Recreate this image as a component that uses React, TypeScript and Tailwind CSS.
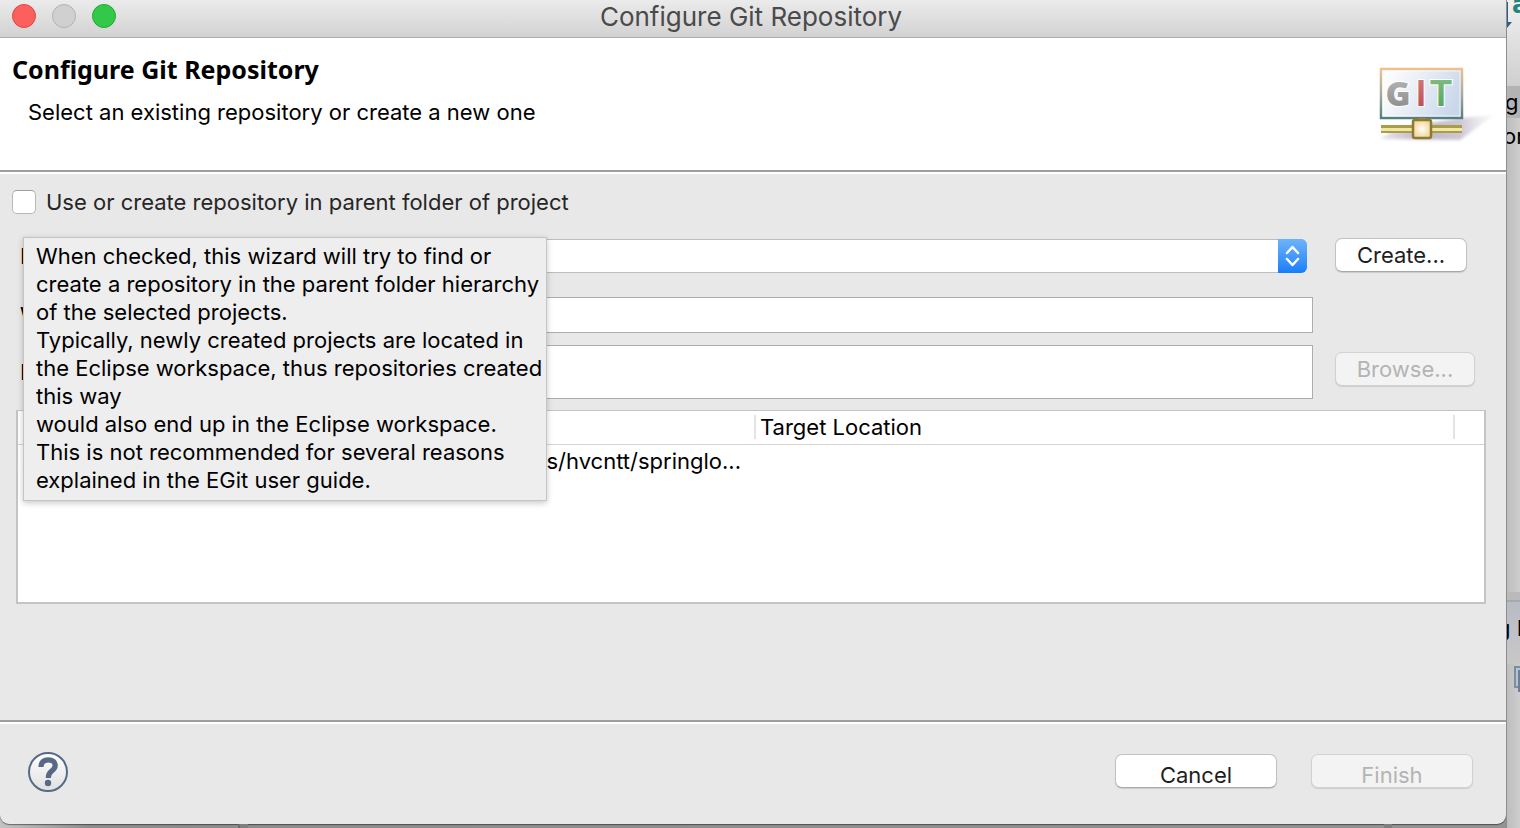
import React from "react";

const field = "block w-full border border-[#adadad] bg-white px-2 outline-none";
const button = "h-[34px] rounded-[7px] border text-[22px] leading-[32px] shadow-[0_1px_1px_rgba(0,0,0,0.12)]";
const enabled = "border-[#c2c2c2] border-b-[#a9a9a9] bg-white text-[#1e1e1e]";
const disabled = "border-[#d2d2d2] bg-[#f3f3f3] text-[#b4b4b4]";

function Divider() {
  return <div className="h-1 shrink-0 border-t-2 border-[#9e9e9e] bg-white" />;
}

function TrafficLights() {
  return (
    <div className="absolute left-3 top-1 flex gap-4">
      <button aria-label="Close" className="size-6 rounded-full border border-[#e2463f] bg-[#fc605c]" />
      <button aria-label="Minimize" disabled className="size-6 rounded-full border border-[#b2b2b2] bg-[#d0d0d0]" />
      <button aria-label="Zoom" className="size-6 rounded-full border border-[#1faa32] bg-[#34c84a]" />
    </div>
  );
}

function GitLogo() {
  return (
    <svg width="120" height="84" viewBox="0 0 120 84" aria-label="Git">
      <defs>
        <linearGradient id="frame" x1="0" y1="0" x2="0" y2="1">
          <stop offset="0" stopColor="#f0bf8e" />
          <stop offset="0.5" stopColor="#a9ab9d" />
          <stop offset="1" stopColor="#52807f" />
        </linearGradient>
        <linearGradient id="screen" x1="0" y1="0.2" x2="1" y2="0.5">
          <stop offset="0" stopColor="#ffffff" />
          <stop offset="0.45" stopColor="#e9eef6" />
          <stop offset="1" stopColor="#c9d7ea" />
        </linearGradient>
        <linearGradient id="shade" x1="0" y1="0" x2="1" y2="0">
          <stop offset="0" stopColor="#b9aec3" stopOpacity="0.3" />
          <stop offset="0.35" stopColor="#b9aec3" stopOpacity="0.9" />
          <stop offset="0.7" stopColor="#c0b8c9" stopOpacity="0.8" />
          <stop offset="1" stopColor="#d8d3dc" stopOpacity="0.1" />
        </linearGradient>
        <linearGradient id="gray" x1="0" y1="0" x2="0" y2="1">
          <stop offset="0" stopColor="#bdbdbd" />
          <stop offset="1" stopColor="#858585" />
        </linearGradient>
        <linearGradient id="red" x1="0" y1="0" x2="0" y2="1">
          <stop offset="0" stopColor="#d57f80" />
          <stop offset="1" stopColor="#b8474b" />
        </linearGradient>
        <linearGradient id="green" x1="0" y1="0" x2="0" y2="1">
          <stop offset="0" stopColor="#85bf85" />
          <stop offset="1" stopColor="#50a258" />
        </linearGradient>
        <radialGradient id="node">
          <stop offset="0" stopColor="#fffdf5" />
          <stop offset="1" stopColor="#f2d9a0" />
        </radialGradient>
        <filter id="soft" x="-10%" y="-20%" width="120%" height="140%">
          <feGaussianBlur stdDeviation="1.5" />
        </filter>
      </defs>
      <path d="M2 73 L20 62 L84 52 L116 49 L82 74 Z" fill="url(#shade)" filter="url(#soft)" />
      <rect x="3" y="3" width="81" height="49" fill="url(#screen)" stroke="url(#frame)" strokeWidth="2.500" />
      <rect x="5" y="5" width="77" height="45" fill="none" stroke="#ffffff" strokeOpacity="0.7" />
      <g fontFamily="'Open Sans', sans-serif" fontWeight="700" fontSize="34" stroke="#ffffff" strokeWidth="2" paintOrder="stroke" textAnchor="middle">
        <text x="20" y="40" fill="url(#gray)" fontWeight="800">G</text>
        <text x="43" y="40" fill="url(#red)" fontFamily="'Liberation Sans', sans-serif" fontSize="36">I</text>
        <text x="63" y="40" fill="url(#green)" fontFamily="'Liberation Sans', sans-serif" fontSize="36">T</text>
      </g>
      <path d="M40 52 h8 v3 h-8z" fill="#9a8b3c" />
      <rect x="3" y="59" width="81" height="8" fill="#a89d49" />
      <rect x="3" y="62" width="81" height="3" fill="#f1e8a6" />
      <rect x="35" y="54" width="18" height="18" rx="2" fill="url(#node)" stroke="#8f7a32" strokeWidth="2.500" />
    </svg>
  );
}

function Workbench() {
  return (
    <div aria-hidden="true" className="flex w-3.5 shrink-0 flex-col overflow-hidden border-l border-[#8d8d8d] bg-linear-to-r from-[#bdbdbd] to-[#cecece] text-[22px] leading-8 text-black">
      <div className="h-[86px] shrink-0 bg-linear-to-b from-[#f0f0f0] to-[#cfcfcf]">
        <svg width="14" height="30" viewBox="0 0 14 30">
          <path d="M0 2h1v20h4l-5 6z" fill="#2c5f86" />
          <text x="5" y="13" fontFamily="'DejaVu Sans', sans-serif" fontWeight="700" fontSize="24" fill="#23867b">a</text>
        </svg>
      </div>
      <div className="h-8 shrink-0 bg-[#b3b3b3]"><span className="-ml-0.5">g</span></div>
      <div className="h-[474px] shrink-0 pt-0.5"><span className="-ml-1">or</span></div>
      <div className="h-2.5 shrink-0 border-b-2 border-[#a5a8b2] bg-[#bababa]" />
      <div className="h-[62px] shrink-0 whitespace-nowrap bg-linear-to-b from-[#b9bbc4] to-[#c8c8c8] pt-2.5"><span className="-ml-2.5">g P</span></div>
      <svg width="14" height="30" viewBox="0 0 14 30" className="shrink-0">
        <rect x="8" y="3" width="12" height="20" fill="#b3c6d2" stroke="#7d8ea3" strokeWidth="2" />
        <rect x="12" y="7" width="12" height="20" fill="#8ca0b2" stroke="#6d7e96" strokeWidth="2" />
      </svg>
    </div>
  );
}

function Tooltip() {
  return (
    <div role="tooltip" className="absolute left-[23px] top-[63px] z-10 whitespace-nowrap border border-[#c4c4c4] bg-[#eeeeee] pb-1.5 pl-3 pt-1 text-[22px] leading-7 text-black shadow-[0_2px_6px_rgba(0,0,0,0.22)]">
      <p className="w-[510px]">
        When checked, this wizard will try to find or<br />
        create a repository in the parent folder hierarchy<br />
        of the selected projects.<br />
        Typically, newly created projects are located in<br />
        the Eclipse workspace, thus repositories created<br />
        this way<br />
        would also end up in the Eclipse workspace.<br />
        This is not recommended for several reasons<br />
        explained in the EGit user guide.
      </p>
    </div>
  );
}

export default function App() {
  return (
    <div className="flex min-h-screen overflow-hidden bg-[#8d8d8d] font-['Inter','Liberation_Sans',sans-serif]">
      <div className="flex min-w-0 flex-1 flex-col bg-linear-to-r from-[#c4c4c4] via-[#8d8d8d] via-6% to-[#939393]">
        <main className="flex flex-1 flex-col rounded-b-[9px] bg-[#e8e8e8] text-[22px] leading-7 shadow-[0_1px_1px_rgba(0,0,0,0.45)]">
          <header className="relative flex h-[38px] shrink-0 items-center justify-center border-b border-[#adadad] bg-linear-to-b from-[#ebebeb] to-[#d2d2d2]">
            <TrafficLights />
            <h1 className="pb-1 pr-1 text-[26px] leading-8 text-[#4a4a4a]">Configure Git Repository</h1>
          </header>

          <section className="flex h-[132px] shrink-0 justify-between bg-white pl-3 pr-2 text-black">
            <div className="pt-[15px]">
              <h2 className="font-['Noto_Sans',sans-serif] text-[25px] font-bold leading-8">Configure Git Repository</h2>
              <p className="pl-4 pt-[13px]">Select an existing repository or create a new one</p>
            </div>
            <div className="pt-7"><GitLogo /></div>
          </section>
          <Divider />

          <section className="relative flex flex-1 flex-col px-4">
            <div className="-ml-1 flex items-center gap-2.5 pt-3.5 text-[#262626]">
              <input id="parent" type="checkbox" className="size-6 appearance-none rounded-[5px] border border-[#b8b8b8] border-t-[#a0a0a0] bg-white" />
              <label htmlFor="parent">Use or create repository in parent folder of project</label>
            </div>

            <form className="mt-[23px] grid grid-cols-[254px_minmax(0,1fr)_140px] items-center gap-x-[22px] pl-1 pr-[15px] text-black" onSubmit={(e) => e.preventDefault()}>
              <label htmlFor="repo">Repository:</label>
              <div className="relative mr-1.5 h-[34px]">
                <select id="repo" className="h-[34px] w-full appearance-none rounded-[6px] border border-[#bdbdbd] bg-white px-2">
                  <option></option>
                </select>
                <span className="pointer-events-none absolute inset-y-0 right-0 flex w-[29px] items-center justify-center rounded-r-[6px] bg-linear-to-b from-[#6cb3fa] to-[#147efb]">
                  <svg width="15" height="22" viewBox="0 0 15 22" fill="none" stroke="white" strokeWidth="2.500" strokeLinecap="round" strokeLinejoin="round">
                    <path d="M2 8 7.500 2 13 8M2 14 7.500 20 13 14" />
                  </svg>
                </span>
              </div>
              <button type="button" className={`${button} ${enabled} -mt-0.5 w-[132px]`}>Create...</button>

              <label htmlFor="tree" className="mt-6">Working tree:</label>
              <input id="tree" readOnly className={`${field} mt-6 h-9`} />
              <span />

              <label htmlFor="path" className="mt-3">Path within repository:</label>
              <input id="path" readOnly className={`${field} mt-3 h-[54px]`} />
              <button type="button" disabled className={`${button} ${disabled} mt-1.5 w-[140px]`}>Browse...</button>
            </form>

            <div className="mr-1 mt-[11px] h-[194px] border-2 border-t border-[#c4c4c4] bg-white text-black">
              <table className="w-full table-fixed border-collapse text-left">
                <colgroup>
                  <col className="w-[400px]" />
                  <col className="w-[338px]" />
                  <col />
                  <col className="w-[29px]" />
                </colgroup>
                <thead>
                  <tr className="h-[33px] border-b border-[#d4d4d4]">
                    <th className="p-0 pl-1 font-normal">Project</th>
                    <th className="p-0 font-normal">
                      <span className="flex h-6 items-center border-r-2 border-[#e4e4e4]">Location</span>
                    </th>
                    <th className="p-0 font-normal">
                      <span className="flex h-6 items-center border-r-2 border-[#e4e4e4] pl-1">Target Location</span>
                    </th>
                    <th className="p-0" />
                  </tr>
                </thead>
                <tbody>
                  <tr className="h-[34px]">
                    <td className="p-0 pl-1">springloaded</td>
                    <td className="p-0 pr-[15px] text-right">/Users/hvcntt/springlo...</td>
                    <td />
                    <td />
                  </tr>
                </tbody>
              </table>
            </div>
            <Tooltip />
          </section>
          <Divider />

          <footer className="flex h-[100px] shrink-0 items-center justify-between pb-1 pl-7 pr-[33px]">
            <button type="button" aria-label="Help" className="size-10">
              <svg width="40" height="40" viewBox="0 0 40 40">
                <defs>
                  <linearGradient id="help" x1="0" y1="0" x2="0" y2="1">
                    <stop offset="0" stopColor="#ffffff" />
                    <stop offset="1" stopColor="#e0e0e0" />
                  </linearGradient>
                </defs>
                <circle cx="20" cy="20" r="19" fill="url(#help)" stroke="#566a87" strokeWidth="2" />
                <path d="M13 15C13 10 16 7.800 20.300 7.800C24.500 7.800 27.200 10 27.200 13.500C27.200 16.300 25.700 17.600 23.300 19.400C21.200 21 20.300 22.200 20.300 26" fill="none" stroke="#566a87" strokeWidth="5.200" />
                <circle cx="20" cy="31" r="3.200" fill="#566a87" />
              </svg>
            </button>
            <div className="flex gap-[34px] pb-0.5">
              <button type="button" className={`${button} ${enabled} w-[162px] pt-1`}>Cancel</button>
              <button type="button" disabled className={`${button} ${disabled} w-[162px] pt-1`}>Finish</button>
            </div>
          </footer>
        </main>
        <div aria-hidden="true" className="flex h-1 shrink-0 justify-between pl-[238px] pr-[114px]">
          <span className="w-2.5 border-l-2 border-[#6f6f6f] bg-[#7f7f7f]" />
          <span className="w-2 bg-[#7f7f7f]" />
        </div>
      </div>
      <Workbench />
    </div>
  );
}
